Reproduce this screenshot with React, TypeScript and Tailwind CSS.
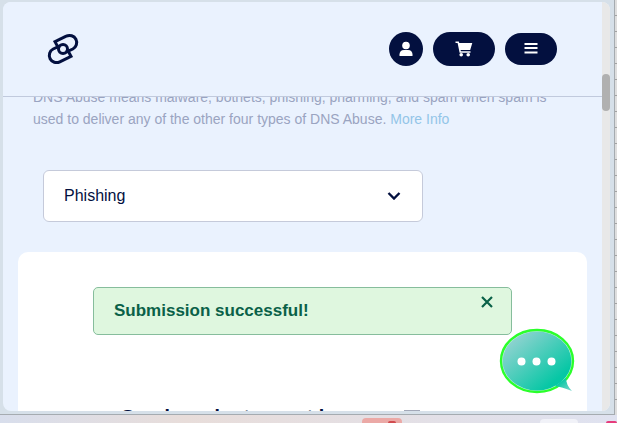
const Logo = () => (
	<svg viewBox="0 0 32 32" className="size-8" fill="none" stroke="#03103f" strokeWidth="3" aria-hidden="true">
		<path d="M11.2 14.600 8 8.600 19.200 3.200A7.200 7.200 0 0 1 25.800 16L19 19.200" />
		<path d="M20.800 17.400 24 23.400 12.800 28.800A7.200 7.200 0 0 1 6.200 16L13 12.800" />
		<circle cx="16" cy="16" r="4.500" />
	</svg>
);

const UserIcon = () => (
	<svg viewBox="0 0 14 16" className="h-4 w-[14px]" fill="currentColor">
		<circle cx="7" cy="4.500" r="3.800" />
		<path d="M0.500 15V13.500A4.700 4.700 0 0 1 5 8.900H9A4.700 4.700 0 0 1 13.500 13.500V15Z" />
	</svg>
);

const CartIcon = () => (
	<svg viewBox="0 0 18 16" className="h-4 w-[18px]" fill="currentColor">
		<path d="M0.500 0.500H3.800L4.300 2H17.300L15.200 9H5.600L5.900 10.200H15.500V11.700H4.600L2.600 2H0.500Z" />
		<circle cx="6.200" cy="13.800" r="1.800" />
		<circle cx="13.200" cy="13.800" r="1.800" />
	</svg>
);

const MenuIcon = () => (
	<svg viewBox="0 0 14 12" className="h-3 w-[14px]" fill="currentColor">
		<path d="M0.500 0H13.500V2H0.500ZM0.500 4H13.500V6H0.500ZM0.500 8.500H13.500V10.500H0.500Z" />
	</svg>
);

const Header = () => (
	<header className="flex h-[95px] shrink-0 items-center justify-between border-b border-[#c1cadd] bg-[#eaf2fe] pr-[45px] pl-11">
		<a href="#" aria-label="Home">
			<Logo />
		</a>
		<nav className="flex items-center gap-[10px] text-white">
			<button aria-label="Account" className="flex size-[34px] items-center justify-center rounded-full bg-[#03103f]">
				<UserIcon />
			</button>
			<button aria-label="Cart" className="flex h-[34px] w-[62px] items-center justify-center rounded-full bg-[#03103f]">
				<CartIcon />
			</button>
			<button aria-label="Menu" className="flex h-8 w-[52px] items-center justify-center rounded-full bg-[#03103f]">
				<MenuIcon />
			</button>
		</nav>
	</header>
);

const AbuseType = () => (
	<div className="relative mt-10 mr-[179px] ml-10">
		<select
			aria-label="Abuse type"
			className="block h-[52px] w-full appearance-none rounded-md border border-[#c5cada] bg-white px-5 text-base text-[#03103f]"
		>
			<option>Phishing</option>
		</select>
		<svg viewBox="0 0 14 8" className="pointer-events-none absolute top-[22px] right-[22px] h-2 w-[14px]" fill="none" stroke="#03103f" strokeWidth="2.4">
			<path d="M1.500 1 7 6.500 12.500 1" />
		</svg>
	</div>
);

const Alert = () => (
	<div role="status" className="relative flex h-12 items-center rounded-[5px] border border-[#86bd9c] bg-[#dff7df] px-5">
		<p className="text-[17px] font-semibold text-[#0a6148]">Submission successful!</p>
		<button aria-label="Close" className="absolute top-2 right-[18px]">
			<svg viewBox="0 0 12 12" className="size-3" stroke="#0a6148" strokeWidth="2.2">
				<path d="M1 1 11 11M11 1 1 11" />
			</svg>
		</button>
	</div>
);

const ChatBubble = () => (
	<button aria-label="Open chat" className="absolute right-[35px] bottom-[17px]">
		<svg viewBox="0 0 76 66" className="h-[66px] w-[76px]">
			<defs>
				<linearGradient id="bubble" x1="0" y1="0" x2="1" y2="1">
					<stop offset="0.1" stopColor="#96d3d2" />
					<stop offset="0.8" stopColor="#06c7a5" />
				</linearGradient>
				<linearGradient id="tail" x1="0" y1="0" x2="1" y2="1">
					<stop offset="0.3" stopColor="#06c7a5" />
					<stop offset="1" stopColor="#7ed8ce" />
				</linearGradient>
			</defs>
			<ellipse cx="38" cy="33" rx="36" ry="31" fill="#c9f5e4" stroke="#2bff2b" strokeWidth="2.4" />
			<ellipse cx="38" cy="33" rx="34.4" ry="29.4" fill="url(#bubble)" />
			<path d="M56 58Q63 59 73 63Q67 57 67 50Z" fill="url(#tail)" />
			<circle cx="22.500" cy="33.500" r="4" fill="#fff" />
			<circle cx="37.500" cy="33.500" r="4" fill="#fff" />
			<circle cx="52.500" cy="33.500" r="4" fill="#fff" />
		</svg>
	</button>
);

const Taskbar = () => (
	<footer className="flex h-2 shrink-0 items-end justify-end gap-7 overflow-hidden bg-linear-to-r from-[#d8deec] via-[#e8ddda] via-30% to-[#dfe2f0]">
		<div className="mr-[110px] flex h-[5px] w-10 justify-center rounded-t-[4px] bg-[#eba9a6] pt-[3px] pl-5">
			<div className="h-[2px] w-2 rounded-t-full bg-[#d14b4f]" />
		</div>
		<div className="h-1 w-[38px] rounded-t-[4px] bg-[#f1f2f8]" />
		<div className="h-[2px] w-[11px] rounded-t-full bg-[#e63c7c]" />
	</footer>
);

const App = () => {
	return (
		<div className="flex h-screen flex-col overflow-hidden font-['Liberation_Sans',Arial,sans-serif]">
			<div className="flex min-h-0 flex-1">
				<div className="flex min-w-0 flex-1 border-r border-b border-[#a5abb0] bg-[#d6e0e9] pt-[2px] pr-1 pb-[3px] pl-[3px]">
					<div className="relative flex min-w-0 flex-1 overflow-hidden rounded-[8px] bg-[#eaf2fe]">
						<main className="flex min-w-0 flex-1 flex-col">
							<Header />
							<div className="flex min-h-0 flex-1 flex-col overflow-hidden">
								<p className="-mt-[11px] shrink-0 pr-10 pl-[30px] text-sm leading-[22px] text-[#9aa4c1]">
									DNS Abuse means malware, botnets, phishing, pharming, and spam when spam is used to deliver any of the other four types of DNS Abuse.{" "}
									<a href="#" className="text-[#93c5e8]">More Info</a>
								</p>
								<AbuseType />
								<section className="mx-[15px] mt-[30px] min-h-0 flex-1 overflow-hidden rounded-t-[10px] bg-white px-[75px] pt-[35px]">
									<Alert />
									<div className="mt-[68px] flex items-start justify-between pr-[92px] pl-7">
										<h2 className="text-xl font-bold whitespace-nowrap text-[#03103f]">Send product report by</h2>
										<input type="checkbox" aria-label="Send product report" className="mt-[7px] size-4 appearance-none border border-[#a3a8b8]" />
									</div>
								</section>
							</div>
						</main>
						<div className="w-2 shrink-0 bg-[#e8e8e8] pt-[72px]">
							<div className="h-[37px] rounded-full bg-[#b0b0b0]" />
						</div>
						<ChatBubble />
					</div>
				</div>
				<div className="w-[2px] bg-[repeating-linear-gradient(#dedede_0_15px,#a3a3a3_15px_16px)]" />
			</div>
			<Taskbar />
		</div>
	);
};

export default App;
